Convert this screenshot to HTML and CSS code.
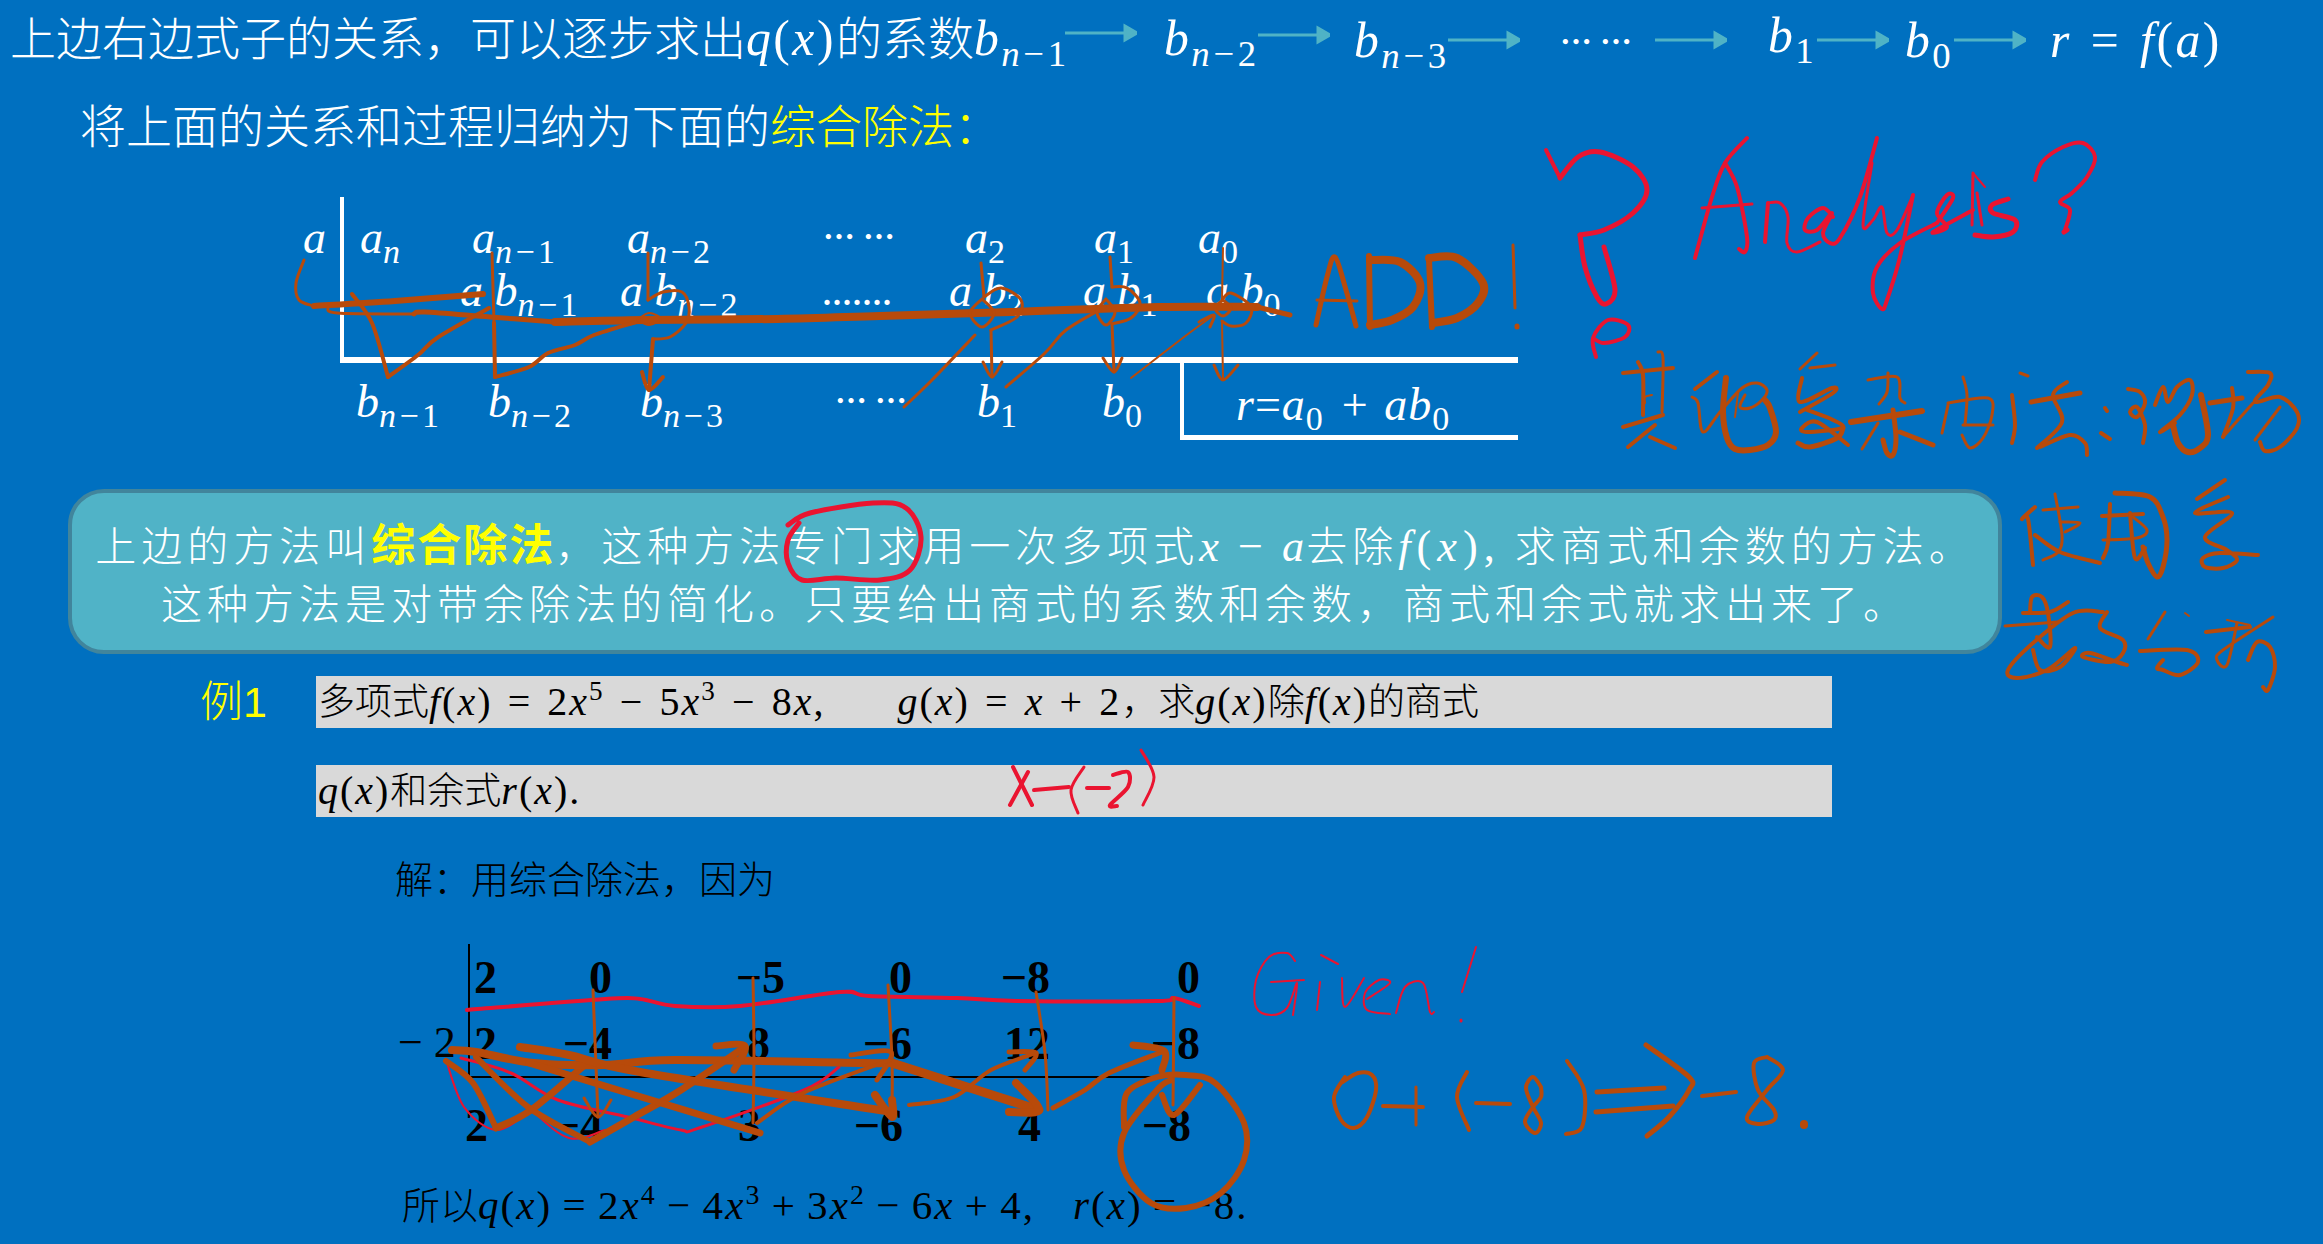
FILE: index.html
```html
<!DOCTYPE html>
<html lang="zh-CN">
<head>
    <meta charset="UTF-8">
    <title>综合除法</title>
    <link rel="stylesheet" href="styles.css">
</head>
<body>
    <div class="slide">
        <div class="steps">
            <div class="step-title">上边右边式子的关系，可以逐步求出<span class="m"><i>q</i>(<i>x</i>)</span>的系数<span class="m"><i>b</i><sub><i>n</i>−1</sub></span></div>
            <svg class="arrow up" viewBox="0 0 72 20"><path d="M0 10H60M60 3L72 10L60 17Z"/></svg>
            <div class="m mid"><i>b</i><sub><i>n</i>−2</sub></div>
            <svg class="arrow" viewBox="0 0 72 20"><path d="M0 10H60M60 3L72 10L60 17Z"/></svg>
            <div class="m low"><i>b</i><sub><i>n</i>−3</sub></div>
            <svg class="arrow low" viewBox="0 0 72 20"><path d="M0 10H60M60 3L72 10L60 17Z"/></svg>
            <div class="dots low">⋯ ⋯</div>
            <svg class="arrow low" viewBox="0 0 72 20"><path d="M0 10H60M60 3L72 10L60 17Z"/></svg>
            <div class="m"><i>b</i><sub>1</sub></div>
            <svg class="arrow low" viewBox="0 0 72 20"><path d="M0 10H60M60 3L72 10L60 17Z"/></svg>
            <div class="m low"><i>b</i><sub>0</sub></div>
            <svg class="arrow low" viewBox="0 0 72 20"><path d="M0 10H60M60 3L72 10L60 17Z"/></svg>
            <div class="m low"><i>r</i> = <i>f</i>(<i>a</i>)</div>
        </div>

        <div class="lead">将上面的关系和过程归纳为下面的<span class="yellow">综合除法：</span></div>

        <div class="scheme">
            <div class="scheme-row row-a">
                <div><i>a</i></div>
                <div><i>a</i><sub><i>n</i></sub></div>
                <div><i>a</i><sub><i>n</i>−1</sub></div>
                <div><i>a</i><sub><i>n</i>−2</sub></div>
                <div class="dots">⋯ ⋯</div>
                <div><i>a</i><sub>2</sub></div>
                <div><i>a</i><sub>1</sub></div>
                <div><i>a</i><sub>0</sub></div>
            </div>
            <div class="scheme-row row-b">
                <div><i>a b</i><sub><i>n</i>−1</sub></div>
                <div><i>a b</i><sub><i>n</i>−2</sub></div>
                <div class="dots-low">.......</div>
                <div><i>a b</i><sub>2</sub></div>
                <div><i>a b</i><sub>1</sub></div>
                <div><i>a b</i><sub>0</sub></div>
            </div>
        </div>
        <div class="scheme-row row-c">
            <div><i>b</i><sub><i>n</i>−1</sub></div>
            <div><i>b</i><sub><i>n</i>−2</sub></div>
            <div><i>b</i><sub><i>n</i>−3</sub></div>
            <div class="dots">⋯ ⋯</div>
            <div><i>b</i><sub>1</sub></div>
            <div><i>b</i><sub>0</sub></div>
            <div class="remainder"><i>r</i>=<i>a</i><sub>0</sub> + <i>ab</i><sub>0</sub></div>
        </div>

        <div class="callout">
            <div>上边的方法叫<b class="yellow">综合除法</b>，这种方法专门求用一次多项式<span class="m"><i>x</i> − <i>a</i></span>去除<span class="m fx"><i>f</i>(<i>x</i>),</span>求商式和余数的方法。</div>
            <div>这种方法是对带余除法的简化。只要给出商式的系数和余数，商式和余式就求出来了。</div>
        </div>

        <div class="example">
            <div class="example-no">例1</div>
            <div class="bar">多项式<span class="m"><i>f</i>(<i>x</i>) = 2<i>x</i><sup>5</sup> − 5<i>x</i><sup>3</sup> − 8<i>x</i>,</span><span class="gap"></span><span class="m"><i>g</i>(<i>x</i>) = <i>x</i> + 2</span>，求<span class="m"><i>g</i>(<i>x</i>)</span>除<span class="m"><i>f</i>(<i>x</i>)</span>的商式</div>
        </div>
        <div class="bar bar-next"><span class="m"><i>q</i>(<i>x</i>)</span>和余式<span class="m"><i>r</i>(<i>x</i>).</span></div>

        <div class="solve">解：用综合除法，因为</div>

        <div class="division">
            <div class="divisor">− 2</div>
            <div class="div-upper">
                <div class="div-row">
                    <span>2</span><span>0</span><span class="wide">−5</span><span>0</span><span>−8</span><span>0</span>
                </div>
                <div class="div-row">
                    <span>2</span><span>−4</span><span>8</span><span>−6</span><span>12</span><span>−8</span>
                </div>
            </div>
        </div>
        <div class="div-row div-result">
            <span>2</span><span>−4</span><span>3</span><span>−6</span><span>4</span><span>−8</span>
        </div>

        <div class="result">所以<span class="m"><i>q</i>(<i>x</i>) = 2<i>x</i><sup>4</sup> − 4<i>x</i><sup>3</sup> + 3<i>x</i><sup>2</sup> − 6<i>x</i> + 4,</span><span class="gap-small"></span><span class="m"><i>r</i>(<i>x</i>) = −8.</span></div>

        <svg class="ink" id="ink" viewBox="0 0 2323 1244"></svg>
    </div>
    <script src="ink.js"></script>
</body>
</html>
```

FILE: styles.css
```css
* {
    box-sizing: border-box;
}

body {
    margin: 0;
    font-family: "Liberation Serif", "Noto Sans CJK SC", serif;
    font-weight: 300;
    color: white;
}

i {
    font-style: italic;
}

sub {
    font-size: 0.74em;
    letter-spacing: 0.1em;
    line-height: 0;
    vertical-align: -0.3em;
}

sup {
    font-size: 0.68em;
    line-height: 0;
    vertical-align: 0.55em;
}

/* math runs: Cambria sets wider than Liberation */
.m {
    font-size: 1.08em;
    letter-spacing: 0.05em;
    word-spacing: 0.08em;
}

.slide {
    position: relative;
    width: 2323px;
    height: 1244px;
    overflow: hidden;
    background-color: #0070c0;
}

.yellow {
    color: #ffff00;
}

/* top line */
.steps {
    display: grid;
    grid-template-columns: 1055px 99px 94px 96px 94px 112px 95px 113px 49px 88px 49px 96px auto;
    align-items: center;
    height: 70px;
    padding-left: 10px;
    font-size: 46px;
    white-space: nowrap;
}

.low {
    margin-top: 10px;
}

.mid {
    margin-top: 6px;
}

.up {
    margin-top: -4px;
}

.arrow {
    width: 72px;
    height: 20px;
    fill: #4fb3c6;
    stroke: #4fb3c6;
    stroke-width: 3;
}

.lead {
    margin: 28px 0 0 80px;
    font-size: 46px;
    line-height: 60px;
}

/* first scheme */
.scheme {
    width: 1178px;
    height: 166px;
    margin: 39px 0 0 340px;
    padding-top: 13px;
    border-left: 4px solid white;
    border-bottom: 6px solid white;
}

.scheme-row {
    display: grid;
    align-items: center;
    height: 52px;
    font-size: 46px;
    line-height: 40px;
    white-space: nowrap;
}

.row-a {
    grid-template-columns: 57px 112px 155px 196px 142px 129px 104px auto;
    height: 55px;
    margin-left: -41px;
}

.row-b {
    grid-template-columns: 160px 203px 126px 134px 123px auto;
    margin-left: 116px;
}

.row-c {
    grid-template-columns: 132px 152px 195px 142px 125px 78px 338px;
    height: 77px;
    margin-left: 356px;
}

.dots {
    font-size: 32px;
    font-weight: bold;
}

.dots-low {
    padding-top: 6px;
    font-size: 32px;
    font-weight: bold;
    letter-spacing: 2px;
}

.remainder {
    align-self: stretch;
    padding: 22px 0 0 52px;
    border-left: 4px solid white;
    border-bottom: 5px solid white;
    letter-spacing: 1px;
    word-spacing: 3px;
}

/* rounded box */
.callout {
    width: 1934px;
    height: 165px;
    margin: 49px 0 0 68px;
    padding-top: 25px;
    border: 4px solid #41859c;
    border-radius: 36px;
    background-color: #50b3c7;
    font-size: 41px;
    letter-spacing: 5px;
    line-height: 58px;
    text-align: center;
    white-space: nowrap;
}

.callout b {
    font-size: 44px;
    font-weight: bold;
    letter-spacing: 2px;
}

.fx {
    letter-spacing: 6px;
    padding-right: 14px;
}

/* example */
.example {
    display: flex;
    height: 52px;
    margin: 22px 0 0 200px;
}

.example-no {
    width: 116px;
    color: #ffff00;
    font-family: "Liberation Sans", "Noto Sans CJK SC", sans-serif;
    font-size: 43px;
    line-height: 52px;
}

.bar {
    width: 1516px;
    height: 52px;
    padding-left: 2px;
    background-color: #d9d9d9;
    color: black;
    font-size: 37px;
    line-height: 52px;
    white-space: nowrap;
}

.bar-next {
    margin: 37px 0 0 316px;
}

.gap {
    display: inline-block;
    width: 72px;
}

.gap-small {
    display: inline-block;
    width: 38px;
}

.solve {
    margin: 39px 0 0 395px;
    color: black;
    font-size: 38px;
    line-height: 48px;
}

/* second scheme */
.division {
    display: flex;
    margin: 40px 0 0 398px;
    color: black;
}

.divisor {
    width: 70px;
    padding-top: 74px;
    font-size: 44px;
    line-height: 50px;
}

.div-upper {
    width: 704px;
    height: 134px;
    padding-top: 1px;
    border-left: 2px solid black;
    border-bottom: 2px solid black;
}

.div-row {
    display: grid;
    grid-template-columns: 27px 115px 158px 142px 138px 150px;
    height: 66px;
    color: black;
    font-size: 46px;
    font-weight: bold;
    line-height: 66px;
    text-align: right;
}

.wide {
    margin-right: -15px;
}

.div-result {
    margin: 22px 0 0 461px;
    height: 51px;
    line-height: 51px;
}

.result {
    margin: 30px 0 0 402px;
    color: black;
    font-size: 38px;
    line-height: 48px;
    white-space: nowrap;
}

.result .m {
    word-spacing: -0.05em;
}

/* pen strokes drawn over the slide */
.ink {
    position: absolute;
    top: 0;
    left: 0;
    width: 2323px;
    height: 1244px;
    fill: none;
    stroke-linecap: round;
    stroke-linejoin: round;
}

.orange {
    stroke: #b84a0a;
}

.red {
    stroke: #ea1430;
}
```

FILE: ink.js
```js
// pen annotations: each stroke is a list of points, smoothed into a curve
var strokes = [
    // question mark and "Analysis?"
    ['red', 4, '1546,150 1560,178'],
    ['red', 5, '1560,178 1578,157 1600,152 1633,167 1647,190 1633,213 1604,230 1580,235'],
    ['red', 5, '1580,235 1585,267 1597,297 1606,304 1615,290 1604,247'],
    ['red', 4, '1596,357 1593,338 1608,320 1628,325 1625,337 1604,343 1593,338'],
    ['red', 4, '1695,258 1712,197 1725,163 1747,138'],
    ['red', 4, '1725,163 1737,187 1747,237 1745,252 1739,249'],
    ['red', 3, '1702,208 1752,204'],
    ['red', 4, '1765,242 1768,203'],
    ['red', 3, '1768,203 1780,203 1788,217 1787,243 1797,252 1820,242'],
    ['red', 4, '1833,217 1823,208 1808,218 1805,230 1817,230 1832,213 1823,233 1830,243 1840,238 1860,197 1877,138'],
    ['red', 3, '1872,163 1863,225 1873,220 1882,207 1887,233 1897,230 1913,195'],
    ['red', 4, '1913,195 1900,257 1887,300 1882,309 1873,293 1877,267 1900,243 1937,223'],
    ['red', 4, '1937,223 1953,198 1947,195 1937,213 1947,227 1933,232 1973,210'],
    ['red', 3, '1973,173 1972,225'],
    ['red', 2, '1973,173 1985,187'],
    ['red', 3, '1977,193 1982,225'],
    ['red', 5, '2008,199 1992,205 1993,213 2015,220 2013,232 1993,237 1975,235'],
    ['red', 4, '2035,180 2042,162 2063,147 2083,143 2095,157 2087,177 2072,193 2060,202 2070,210 2065,230'],
    ['red', 5, '2067,230 2064,232'],

    // ADD!
    ['orange', 5, '1316,325 1327,277 1335,257 1346,290 1356,326'],
    ['orange', 3, '1317,300 1357,301'],
    ['orange', 6, '1369,256 1370,327'],
    ['orange', 8, '1370,260 1400,262 1420,283 1413,307 1392,320 1370,325'],
    ['orange', 6, '1429,260 1432,327'],
    ['orange', 8, '1429,258 1457,258 1483,283 1478,303 1457,318 1433,323'],
    ['orange', 3, '1513,245 1515,308'],
    ['orange', 5, '1517,326 1517,327'],

    // scheme: addition lines and arrows
    ['orange', 3, '304,260 296,283 299,300 314,306'],
    ['orange', 6, '314,306 395,301 483,294'],
    ['orange', 3, '328,307 337,313 414,314'],
    ['orange', 5, '414,314 425,312 490,317 555,322'],
    ['orange', 8, '555,322 644,320 777,319 880,316 1010,312 1158,307 1257,307'],
    ['orange', 5, '1257,307 1290,315'],
    ['orange', 4, '352,294 372,323 388,377'],
    ['orange', 4, '388,377 418,355 437,338 489,308'],
    ['orange', 3, '492,253 494,323'],
    ['orange', 4, '494,323 495,377'],
    ['orange', 4, '495,377 529,367 548,353 575,345 594,335 636,322'],
    ['orange', 3, '648,253 648,300'],
    ['orange', 3, '648,300 663,292 682,292 689,307 686,323 670,337 653,339'],
    ['orange', 4, '653,339 649,390'],
    ['orange', 4, '642,372 649,390 663,377'],
    ['orange', 2, '637,320 649,313 661,319 649,325 637,320'],
    ['orange', 3, '981,263 984,297'],
    ['orange', 3, '984,297 1001,288 1021,300 1017,317 991,330'],
    ['orange', 3, '991,330 992,377'],
    ['orange', 3, '983,362 992,377 1002,362'],
    ['orange', 3, '982,299 970,313 982,327 994,313 982,299'],
    ['orange', 3, '904,407 932,380 975,335'],
    ['orange', 3, '1006,387 1045,353 1066,330 1105,307'],
    ['orange', 3, '1110,257 1112,287'],
    ['orange', 3, '1112,287 1127,288 1140,303 1131,318 1112,324'],
    ['orange', 3, '1112,324 1114,372'],
    ['orange', 3, '1103,358 1114,372 1122,358'],
    ['orange', 3, '1106,299 1097,312 1106,325 1115,312 1106,299'],
    ['orange', 2, '1131,378 1184,337 1214,315'],
    ['orange', 3, '1199,322 1214,315 1210,327'],
    ['orange', 2, '1223,248 1222,300'],
    ['orange', 3, '1222,300 1231,293 1251,307 1246,323 1231,326 1222,321'],
    ['orange', 2, '1222,321 1223,380'],
    ['orange', 3, '1214,365 1223,380 1238,365'],
    ['orange', 3, '1223,300 1215,308 1223,316 1231,308 1223,300'],

    // handwriting right of the scheme
    ['orange', 4, '1623,373 1673,368'],
    ['orange', 4, '1638,362 1643,375 1643,415'],
    ['orange', 3, '1658,352 1663,358 1662,412'],
    ['orange', 2, '1652,395 1645,397 1645,403'],
    ['orange', 4, '1623,427 1663,415'],
    ['orange', 4, '1655,425 1628,447'],
    ['orange', 4, '1650,437 1675,448'],
    ['orange', 4, '1717,372 1695,389'],
    ['orange', 3, '1692,397 1698,403 1703,432 1720,412 1742,388 1757,383 1767,390 1762,400 1750,408 1740,407 1745,395'],
    ['orange', 6, '1726,378 1723,412 1727,438 1735,449 1750,450 1768,445 1776,432 1770,408 1765,400'],
    ['orange', 2, '1738,393 1735,417'],
    ['orange', 3, '1817,353 1800,369'],
    ['orange', 3, '1810,368 1835,365'],
    ['orange', 4, '1802,378 1800,402 1832,388 1833,393 1800,412'],
    ['orange', 4, '1807,410 1833,420 1842,428 1807,432 1802,428 1817,422 1848,445'],
    ['orange', 5, '1798,443 1810,447 1837,438 1843,428'],
    ['orange', 3, '1868,380 1897,377 1900,398 1905,403'],
    ['orange', 3, '1888,373 1887,392 1879,404'],
    ['orange', 6, '1851,422 1922,411'],
    ['orange', 5, '1893,410 1896,438 1893,455 1887,453 1883,440'],
    ['orange', 3, '1878,423 1862,449'],
    ['orange', 5, '1900,432 1933,445'],
    ['orange', 3, '1948,405 1942,433'],
    ['orange', 3, '1948,403 1988,398 1992,415 1983,438 1970,448 1962,435'],
    ['orange', 3, '1963,377 1967,395 1965,425'],
    ['orange', 3, '1963,425 1993,425'],
    ['orange', 3, '2020,373 2028,376'],
    ['orange', 4, '2012,395 2015,425 2012,443'],
    ['orange', 5, '2031,402 2080,393'],
    ['orange', 4, '2067,382 2053,395 2062,422 2037,448'],
    ['orange', 4, '2040,447 2070,435 2085,443 2087,455'],
    ['orange', 4, '2105,408 2107,411'],
    ['orange', 4, '2101,433 2110,439'],
    ['orange', 4, '2128,389 2140,392 2145,403 2137,417 2130,412 2137,407 2145,425 2143,443'],
    ['orange', 4, '2155,405 2163,387 2168,402 2177,387 2190,380 2192,395 2180,415 2160,432 2175,423'],
    ['orange', 6, '2201,395 2208,435 2200,448 2188,452 2178,443 2173,425'],
    ['orange', 5, '2210,403 2242,398'],
    ['orange', 4, '2232,388 2233,408 2223,437'],
    ['orange', 3, '2223,437 2253,403'],
    ['orange', 4, '2248,372 2270,373 2268,385 2255,402 2280,397 2297,412 2297,428 2280,447 2265,451 2260,442'],
    ['orange', 3, '2280,407 2255,440'],

    // used / data analysis
    ['orange', 4, '2035,507 2022,519 2028,519 2033,565'],
    ['orange', 3, '2043,510 2078,507'],
    ['orange', 3, '2055,494 2062,535 2058,552 2043,560'],
    ['orange', 3, '2065,532 2080,523 2060,522'],
    ['orange', 4, '2035,535 2060,552 2100,563'],
    ['orange', 5, '2115,493 2150,497 2163,517 2167,540 2163,567 2157,577 2148,563 2143,547'],
    ['orange', 4, '2110,504 2108,543 2103,558'],
    ['orange', 4, '2102,516 2143,514'],
    ['orange', 3, '2133,517 2147,530 2137,538 2103,540'],
    ['orange', 4, '2130,513 2135,558 2145,548'],
    ['orange', 4, '2225,480 2197,499'],
    ['orange', 4, '2228,497 2195,513 2232,513 2205,537 2227,550 2237,560 2223,568 2205,567 2203,558 2220,553 2258,555'],
    ['orange', 4, '2030,613 2032,597 2042,597 2048,613 2050,647 2037,637'],
    ['orange', 4, '2023,613 2050,612 2068,602'],
    ['orange', 3, '2005,626 2057,622'],
    ['orange', 4, '2103,612 2073,613 2033,643 2008,670 2017,678 2047,670 2075,648 2060,667 2040,670 2033,650'],
    ['orange', 4, '2107,612 2100,628 2123,640 2123,653 2110,662 2083,657 2090,653 2117,662 2127,665'],
    ['orange', 3, '2165,612 2148,639'],
    ['orange', 2, '2185,613 2189,616'],
    ['orange', 4, '2140,651 2187,650 2198,662 2180,675 2163,670 2157,668 2163,660'],
    ['orange', 2, '2227,620 2250,625'],
    ['orange', 4, '2206,632 2250,627'],
    ['orange', 3, '2237,623 2227,665 2217,660 2223,650 2273,617'],
    ['orange', 4, '2248,660 2257,642 2270,647 2275,667 2268,690 2263,687'],

    // circled word and x-(-2)
    ['red', 5, '788,525 810,513 873,503 906,508 921,537 910,570 880,580 836,578 802,580 788,563 788,540 799,523'],
    ['red', 4, '1013,767 1032,805'],
    ['red', 4, '1028,772 1010,805'],
    ['red', 4, '1034,790 1069,787'],
    ['red', 3, '1084,767 1071,790 1078,813'],
    ['red', 4, '1087,788 1109,788'],
    ['red', 4, '1113,775 1128,772 1128,787 1110,805 1117,806'],
    ['red', 3, '1141,750 1154,777 1143,805'],

    // Given!
    ['red', 2, '1295,961 1287,953 1269,957 1256,980 1256,1007 1271,1015 1287,1008 1297,983 1293,1015'],
    ['red', 2, '1271,982 1304,980'],
    ['red', 2, '1320,982 1317,1010'],
    ['red', 2, '1321,955 1338,964'],
    ['red', 2, '1342,978 1345,1007 1364,978'],
    ['red', 2, '1367,999 1390,983 1379,980 1365,993 1367,1010 1390,1014'],
    ['red', 2, '1396,1013 1405,987 1423,983 1430,1012 1434,1012'],
    ['red', 2, '1476,947 1462,992'],
    ['red', 3, '1461,1020 1461,1021'],

    // 0+(-8) => -8.
    ['orange', 4, '1345,1077 1334,1097 1341,1120 1354,1128 1367,1117 1376,1090 1372,1075 1358,1073 1341,1083'],
    ['orange', 4, '1383,1106 1423,1107'],
    ['orange', 3, '1416,1087 1416,1125'],
    ['orange', 4, '1467,1072 1457,1097 1469,1130'],
    ['orange', 4, '1476,1103 1510,1104'],
    ['orange', 4, '1541,1087 1533,1077 1526,1088 1533,1107 1541,1123 1535,1133 1525,1122 1533,1107 1541,1097 1541,1087'],
    ['orange', 4, '1567,1061 1584,1090 1582,1127 1566,1134'],
    ['orange', 5, '1597,1092 1664,1088'],
    ['orange', 5, '1596,1112 1673,1106'],
    ['orange', 5, '1646,1045 1689,1077 1689,1090 1669,1117 1647,1136'],
    ['orange', 4, '1702,1096 1736,1092'],
    ['orange', 4, '1767,1057 1754,1063 1758,1090 1774,1110 1774,1120 1758,1124 1747,1117 1767,1090 1783,1070 1767,1057'],
    ['orange', 8, '1804,1124 1804,1125'],

    // division: red lines
    ['red', 4, '467,1010 605,999 640,999 675,1006 740,1006 840,992 869,996 957,998 1016,1001 1157,1001 1174,998 1199,1006'],
    ['red', 2, '446,1060 464,1107 496,1130 528,1113'],
    ['red', 3, '461,1058 511,1073 558,1100 628,1117 681,1130 699,1128 804,1090 839,1067'],
    ['red', 2, '479,1060 528,1107 569,1138 605,1130'],

    // division: pen arrows
    ['orange', 3, '593,990 598,1117'],
    ['orange', 3, '584,1098 598,1117 611,1100'],
    ['orange', 3, '753,978 754,1053 753,1123'],
    ['orange', 3, '888,985 892,1060 892,1107'],
    ['orange', 3, '1036,992 1045,1053 1048,1110'],
    ['orange', 3, '1174,998 1173,1105'],
    ['orange', 6, '1162,1095 1174,1115 1200,1085'],
    ['orange', 6, '446,1061 473,1083 496,1128'],
    ['orange', 7, '496,1128 531,1110 587,1063'],
    ['orange', 8, '452,1050 476,1052 534,1063 605,1065 675,1060 863,1063 892,1063'],
    ['orange', 9, '892,1063 1039,1110'],
    ['orange', 8, '1016,1083 1039,1110 1009,1112'],
    ['orange', 8, '520,1047 569,1055 640,1072 892,1112'],
    ['orange', 8, '875,1095 892,1117 892,1100'],
    ['orange', 6, '476,1057 528,1107 590,1142'],
    ['orange', 7, '590,1142 634,1117 681,1090 745,1047'],
    ['orange', 7, '716,1046 745,1046 734,1070'],
    ['orange', 7, '760,1133 628,1093 529,1063'],
    ['orange', 5, '851,1055 891,1052 877,1080'],
    ['orange', 4, '757,1123 803,1093 890,1060'],
    ['orange', 4, '909,1105 954,1097 991,1070 1036,1053'],
    ['orange', 5, '1009,1052 1036,1053 1025,1070'],
    ['orange', 5, '1053,1108 1085,1090 1109,1073 1162,1052'],
    ['orange', 7, '1133,1045 1164,1051 1162,1070'],
    ['orange', 6, '1124,1127 1127,1093 1157,1077 1186,1075 1215,1083 1244,1123 1244,1160 1221,1193 1186,1208 1151,1203 1124,1170 1124,1133 1157,1090 1171,1080']
];

function smoothPath(points) {
    var d = 'M' + points[0].join(' ');
    for (var i = 0; i < points.length - 1; i++) {
        var p0 = points[i - 1] || points[i];
        var p1 = points[i];
        var p2 = points[i + 1];
        var p3 = points[i + 2] || p2;
        d += ' C' + (p1[0] + (p2[0] - p0[0]) / 6) + ' ' + (p1[1] + (p2[1] - p0[1]) / 6) +
            ' ' + (p2[0] - (p3[0] - p1[0]) / 6) + ' ' + (p2[1] - (p3[1] - p1[1]) / 6) +
            ' ' + p2[0] + ' ' + p2[1];
    }
    return d;
}

var ink = document.getElementById('ink');
strokes.forEach(function(stroke) {
    var points = stroke[2].split(' ').map(function(pair) {
        return pair.split(',').map(Number);
    });
    var path = document.createElementNS('http://www.w3.org/2000/svg', 'path');
    path.setAttribute('class', stroke[0]);
    path.setAttribute('stroke-width', stroke[1]);
    path.setAttribute('d', smoothPath(points));
    ink.appendChild(path);
});
```
